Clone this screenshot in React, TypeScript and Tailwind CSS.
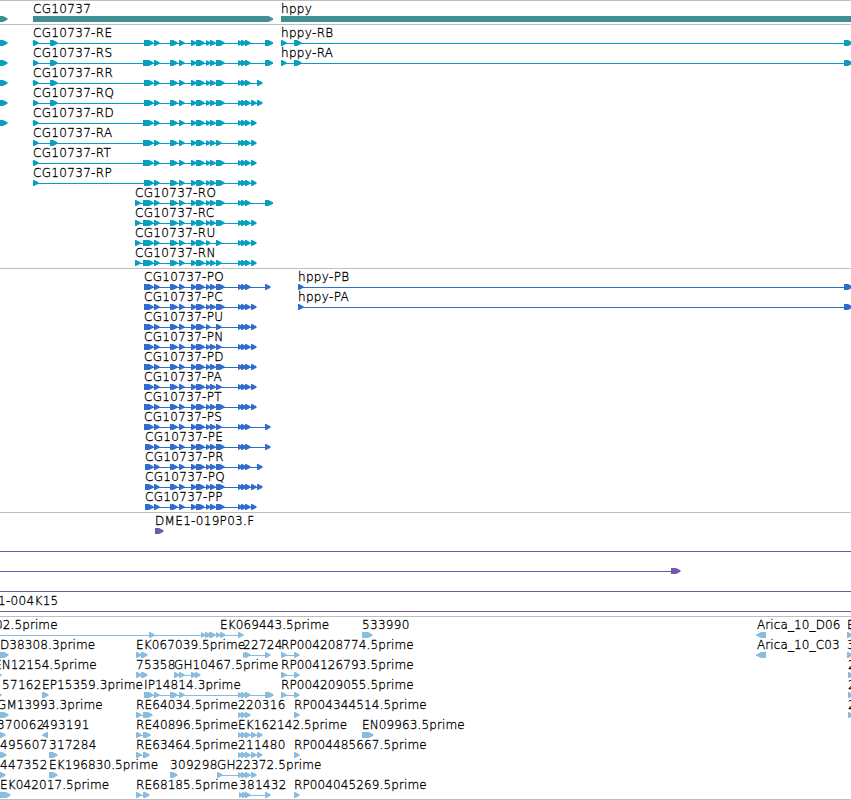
type Glyph = [start: number, end: number]

interface Feature {
  label?: string
  x: number
  arrows: Glyph[]
  from?: number
  to?: number
  reverse?: boolean
}

interface TrackData {
  name: string
  color: string
  rows: Feature[][]
}

// Shared exons of the CG10737 gene model
const MIDDLE: Glyph[] = [[154, 160], [170, 176], [172, 178], [179, 185], [191, 197], [196, 205]]
const PAIR: Glyph[] = [[206, 211], [210, 216]]
const TRIPLE: Glyph[] = [[238, 243], [241, 247], [245, 251]]
const LAST: Glyph = [251, 257]
const FAR: Glyph = [257, 263]

interface ModelOptions {
  lead: Glyph[]
  block?: number
  wide?: boolean
  single?: boolean
  tail: Glyph[]
}

function model(label: string, x: number, { lead, block = 144, wide = true, single, tail }: ModelOptions): Feature {
  return {
    label,
    x,
    arrows: [
      ...lead,
      [block, 154],
      ...MIDDLE,
      ...(single ? PAIR.slice(0, 1) : PAIR),
      wide ? [216, 225] : [216, 222],
      ...TRIPLE,
      ...tail,
    ],
  }
}

const A: Glyph = [33, 39]
const B: Glyph = [50, 58]
const C: Glyph = [135, 141]
const END: Glyph = [265, 273.5]
const P_END: Glyph = [265, 271]

const edge = (end = 8): Feature => ({ x: 0, arrows: [[-4, end]] })

const hppy = (label: string, x: number, arrows: Glyph[]): Feature => ({
  label,
  x,
  arrows: [...arrows, [844, 853]],
})

const TRANSCRIPTS: TrackData = {
  name: "transcripts",
  color: "#069fc0",
  rows: [
    [edge(), model("CG10737-RE", 33, { lead: [A, B], tail: [END] }), hppy("hppy-RB", 281, [[281, 287], [294, 302]])],
    [edge(), model("CG10737-RS", 33, { lead: [A, B], block: 143, tail: [END] }), hppy("hppy-RA", 281, [[281, 287], [294, 302]])],
    [edge(), model("CG10737-RR", 33, { lead: [A, B], tail: [FAR] })],
    [edge(), model("CG10737-RQ", 33, { lead: [A, B], tail: [LAST, FAR] })],
    [edge(), model("CG10737-RD", 33, { lead: [A], block: 143, tail: [LAST] })],
    [model("CG10737-RA", 33, { lead: [A, B], block: 143, wide: false, tail: [LAST] })],
    [model("CG10737-RT", 33, { lead: [A], block: 143, tail: [LAST] })],
    [model("CG10737-RP", 33, { lead: [A], tail: [LAST] })],
    [model("CG10737-RO", 135, { lead: [C], block: 143, tail: [END] })],
    [model("CG10737-RC", 135, { lead: [C], block: 143, tail: [LAST] })],
    [model("CG10737-RU", 135, { lead: [C], block: 143, single: true, wide: false, tail: [LAST] })],
    [model("CG10737-RN", 135, { lead: [C], block: 143, wide: false, tail: [LAST] })],
  ],
}

const PROTEINS: TrackData = {
  name: "proteins",
  color: "#306ccd",
  rows: [
    [model("CG10737-PO", 144, { lead: [], tail: [P_END] }), hppy("hppy-PB", 298, [[298, 304]])],
    [model("CG10737-PC", 144, { lead: [], tail: [LAST] }), hppy("hppy-PA", 298, [[298, 304]])],
    [model("CG10737-PU", 144, { lead: [], single: true, wide: false, tail: [LAST] })],
    [model("CG10737-PN", 144, { lead: [], wide: false, tail: [LAST] })],
    [model("CG10737-PD", 144, { lead: [], tail: [LAST] })],
    [model("CG10737-PA", 144, { lead: [], wide: false, tail: [LAST] })],
    [model("CG10737-PT", 144, { lead: [], tail: [LAST] })],
    [model("CG10737-PS", 144, { lead: [], wide: false, tail: [P_END] })],
    [model("CG10737-PE", 145, { lead: [], block: 145, tail: [P_END] })],
    [model("CG10737-PR", 145, { lead: [], block: 145, tail: [FAR] })],
    [model("CG10737-PQ", 145, { lead: [], block: 145, tail: [LAST, FAR] })],
    [model("CG10737-PP", 145, { lead: [], block: 145, tail: [LAST] })],
  ],
}

const CLONES: TrackData = {
  name: "clones",
  color: "#7358a6",
  rows: [
    [{ label: "DME1-019P03.F", x: 155, arrows: [[155, 164]] }],
    [{ x: 0, arrows: [], from: 0, to: 851 }],
    [{ x: 0, arrows: [[671, 681]], from: 0 }],
    [{ x: 0, arrows: [], from: 0, to: 851 }],
    [{ label: "1-004K15", x: -2, arrows: [], from: 0, to: 851 }],
  ],
}

const RP: Glyph[] = [[281, 287], [294, 300]]
const RP_SHORT: Glyph[] = [[294, 300]]

const ESTS: TrackData = {
  name: "ests",
  color: "#8abddd",
  rows: [
    [
      { label: "02.5prime", x: -5, from: 0, arrows: [[149, 155], [201, 206], [205, 211], [209, 216], [216, 221], [220, 226], [238, 244]] },
      { label: "EK069443.5prime", x: 220, arrows: [] },
      { label: "533990", x: 362, arrows: [[362, 373]] },
      { label: "Arica_10_D06", x: 757, arrows: [[756, 766]], reverse: true },
      { label: "E", x: 847, arrows: [[847, 853]] },
    ],
    [
      { label: "D38308.3prime", x: 0, arrows: [[-4, 9]] },
      { label: "EK067039.5prime", x: 136, arrows: [[136, 142], [141, 148]] },
      { label: "22724", x: 243, arrows: [[243, 248], [245, 251], [265, 271]] },
      { label: "RP004208774.5prime", x: 281, arrows: RP },
      { label: "Arica_10_C03", x: 757, arrows: [[756, 766]], reverse: true },
      { label: "3", x: 847, arrows: [[847, 853]] },
    ],
    [
      { label: "EN12154.5prime", x: -6, arrows: [[-4, 2]] },
      { label: "75358", x: 136, arrows: [[136, 142], [141, 148]] },
      { label: "GH10467.5prime", x: 174, arrows: [[174, 180], [179, 185], [191, 197], [195, 201]] },
      { label: "RP004126793.5prime", x: 281, arrows: RP },
      { label: "2", x: 848, arrows: [[848, 854]] },
    ],
    [
      { label: "57162", x: 2, arrows: [[-4, 2]] },
      { label: "EP15359.3prime", x: 42, arrows: [[42, 49]] },
      { label: "IP14814.3prime", x: 144, arrows: [[144, 154], [154, 160], [170, 176], [172, 178], [179, 185], ...TRIPLE, [265, 274]] },
      { label: "RP004209055.5prime", x: 281, arrows: RP },
      { label: "2", x: 848, arrows: [[848, 854]] },
    ],
    [
      { label: "GM13993.3prime", x: -3, arrows: [[-4, 9]] },
      { label: "RE64034.5prime", x: 136, arrows: [[136, 142], [143, 153]] },
      { label: "220316", x: 238, arrows: TRIPLE },
      { label: "RP004344514.5prime", x: 294, arrows: RP_SHORT },
      { label: "2", x: 848, arrows: [[848, 854]] },
    ],
    [
      { label: "370062", x: -3, arrows: [[-4, 6]] },
      { label: "493191", x: 42, arrows: [[42, 48]], reverse: true },
      { label: "RE40896.5prime", x: 136, arrows: [[136, 142], [143, 151]] },
      { label: "EK162142.5prime", x: 238, arrows: [...TRIPLE, LAST, FAR] },
      { label: "EN09963.5prime", x: 362, arrows: [[362, 374]] },
    ],
    [
      { label: "495607", x: 0, arrows: [[-4, 7]] },
      { label: "317284", x: 49, arrows: [[49, 58]] },
      { label: "RE63464.5prime", x: 136, arrows: [[136, 142], [143, 150]] },
      { label: "211480", x: 238, arrows: [...TRIPLE, LAST, FAR] },
      { label: "RP004485667.5prime", x: 294, arrows: RP_SHORT },
    ],
    [
      { label: "447352", x: 0, arrows: [[-4, 6]] },
      { label: "EK196830.5prime", x: 49, arrows: [[49, 58]] },
      { label: "309298", x: 170, arrows: [[170, 176], [172, 178]] },
      { label: "GH22372.5prime", x: 217, arrows: [[217, 223], ...TRIPLE, LAST] },
    ],
    [
      { label: "EK042017.5prime", x: 0, arrows: [[-4, 11]] },
      { label: "RE68185.5prime", x: 136, arrows: [[136, 142], [143, 150]] },
      { label: "381432", x: 239, arrows: [[239, 244], [242, 248], [245, 251], [265, 271]] },
      { label: "RP004045269.5prime", x: 294, arrows: RP_SHORT },
    ],
  ],
}

function arrowPoints([start, end]: Glyph, reverse?: boolean) {
  const head = Math.min(5, end - start)
  if (reverse) {
    return `${end},0 ${start + head},0 ${start + 0.5},2.3 ${start + 0.5},3.7 ${start + head},6 ${end},6`
  }
  return `${start},0 ${end - head},0 ${end - 0.5},2.3 ${end - 0.5},3.7 ${end - head},6 ${start},6`
}

function FeatureGlyph({ feature }: { feature: Feature }) {
  const { arrows } = feature
  const from = feature.from ?? arrows[0]?.[0] ?? 0
  const to = feature.to ?? (arrows.length > 0 ? arrows[arrows.length - 1][0] + 1 : from)
  return (
    <g>
      {to > from && <rect x={from} y={3} width={to - from} height={1} />}
      {arrows.map((arrow, i) => (
        <polygon key={i} points={arrowPoints(arrow, feature.reverse)} />
      ))}
    </g>
  )
}

function Label({ text, x }: { text: string; x: number }) {
  const tight = text.includes("prime") || text.includes("_")
  return (
    <span
      className={`absolute top-0 whitespace-pre font-['DejaVu_Sans_Light','DejaVu_Sans',sans-serif] text-[12px] leading-4 font-extralight text-black [-webkit-text-stroke:0.3px_black] ${
        tight ? "tracking-[0.11px]" : "tracking-[0.32px]"
      }`}
      style={{ left: x }}
    >
      {text}
    </span>
  )
}

function Row({ features, color }: { features: Feature[]; color: string }) {
  return (
    <div className="relative flex h-5 flex-col justify-end">
      {features.map((f, i) => f.label && <Label key={i} text={f.label} x={f.x} />)}
      <svg width="851" height="6" viewBox="0 0 851 6" fill={color} className="mb-[-1px] block shrink-0">
        {features.map((f, i) => (
          <FeatureGlyph key={i} feature={f} />
        ))}
      </svg>
    </div>
  )
}

function Track({ track }: { track: TrackData }) {
  return (
    <section className="border-t border-[#bebebe] pb-[3px] last:pb-[2px]">
      {track.rows.map((features, i) => (
        <Row key={i} features={features} color={track.color} />
      ))}
    </section>
  )
}

function GeneTrack() {
  return (
    <section className="border-t border-[#bebebe] pb-[3px]">
      <div className="relative flex h-5 flex-col justify-end">
        <Label text="CG10737" x={33} />
        <Label text="hppy" x={281} />
        <svg width="851" height="6" viewBox="0 0 851 6" fill="#3f8f94" className="mb-[-1px] block shrink-0">
          <polygon points={arrowPoints([-4, 8])} />
          <polygon points={arrowPoints([33, 273.5])} />
          <rect x={281} y={0} width={570} height={6} />
        </svg>
      </div>
    </section>
  )
}

export default function App() {
  return (
    <div className="flex h-[800px] w-[851px] flex-col overflow-hidden border-b border-[#bebebe] bg-white">
      <GeneTrack />
      {[TRANSCRIPTS, PROTEINS, CLONES, ESTS].map(track => (
        <Track key={track.name} track={track} />
      ))}
    </div>
  )
}
